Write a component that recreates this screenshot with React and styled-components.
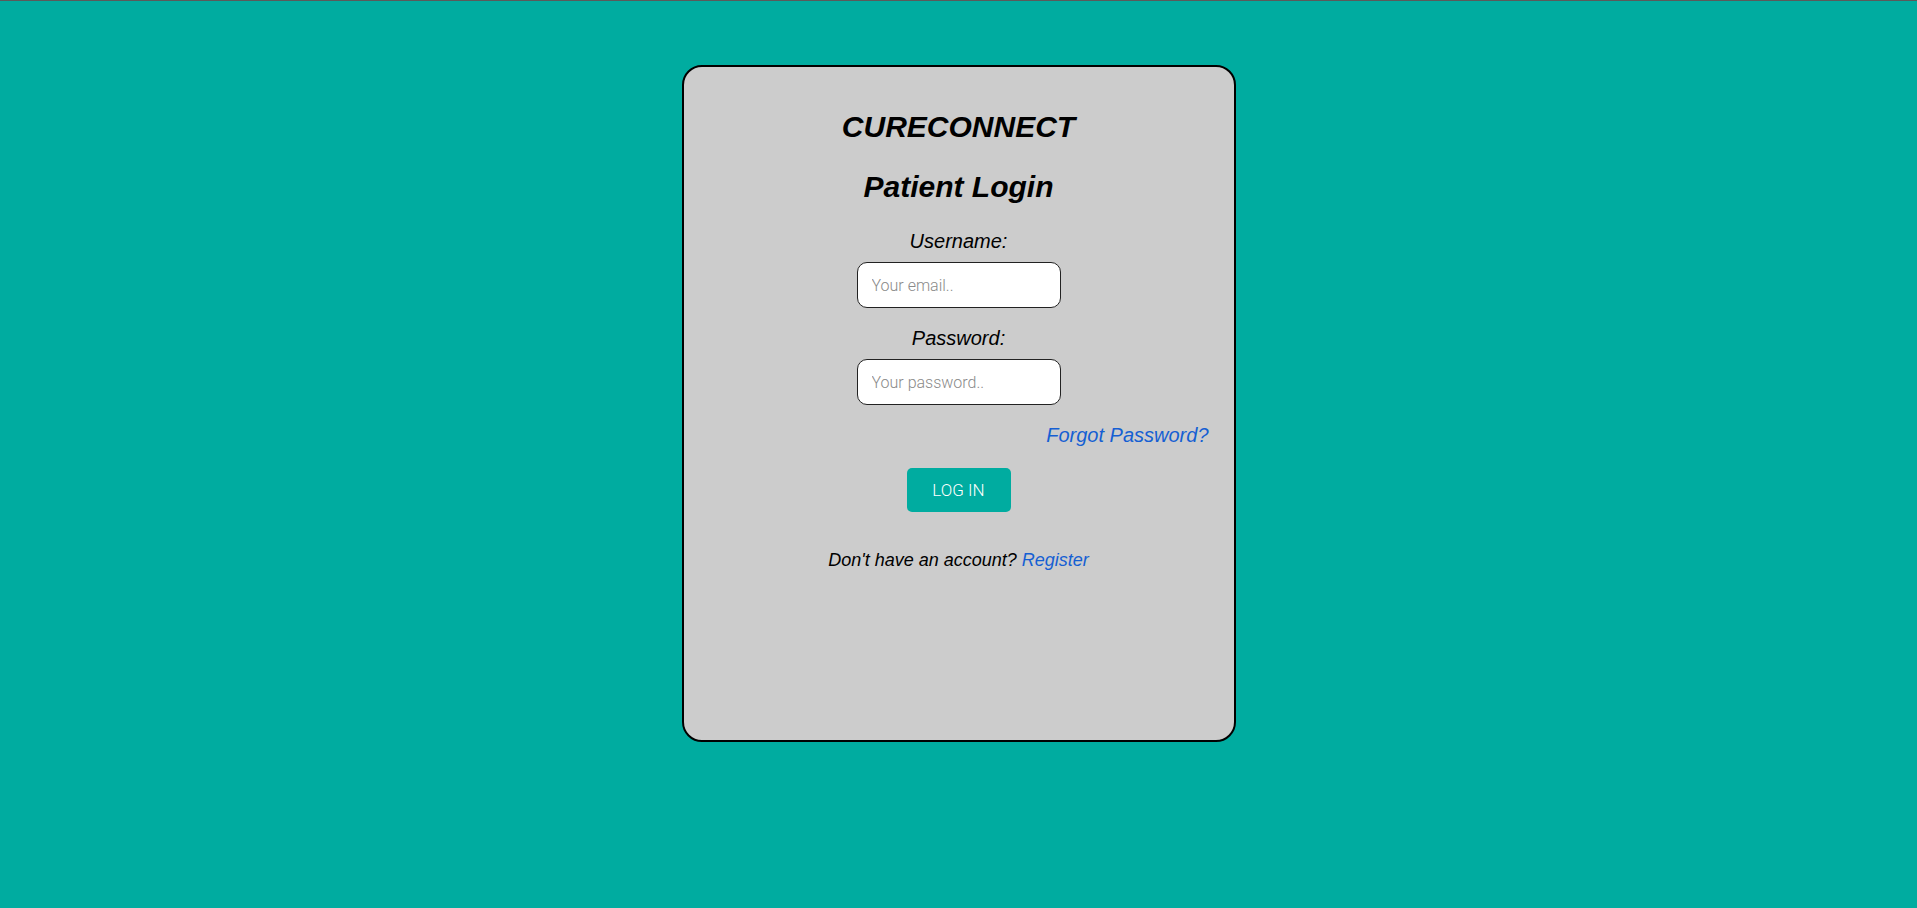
import React from "react";
import styled, { createGlobalStyle } from "styled-components";

const GlobalStyle = createGlobalStyle`
  html, body {
    margin: 0;
    padding: 0;
  }
  body {
    background: #00aca0;
    font-family: "Liberation Sans", Arial, sans-serif;
    min-height: 908px;
    border-top: 1px solid #5a5a5a;
  }
`;

const Page = styled.main`
  display: flex;
  justify-content: center;
  padding-top: 64px;
`;

const Card = styled.form`
  box-sizing: border-box;
  width: 554px;
  height: 677px;
  background: #cccccc;
  border: 2px solid #000;
  border-radius: 20px;
  display: flex;
  flex-direction: column;
  align-items: center;
`;

const Title = styled.h1`
  margin: ${(p) => p.$top}px 0 0;
  font-size: 30px;
  line-height: 34px;
  font-weight: bold;
  font-style: italic;
  color: #000;
`;

const Label = styled.label`
  margin-top: ${(p) => p.$top}px;
  font-size: 20px;
  line-height: 23px;
  font-style: italic;
  color: #000;
`;

const Input = styled.input`
  box-sizing: border-box;
  margin-top: 9px;
  width: 204px;
  height: 46px;
  padding: 0 14px;
  border: 1px solid #222;
  border-radius: 10px;
  background: #fff;
  font-family: Roboto, "Liberation Sans", sans-serif;
  font-weight: 300;
  font-size: 16px;
  color: #333;
  outline: none;
  &::placeholder {
    color: #8a8a8a;
  }
`;

const Forgot = styled.a`
  align-self: flex-end;
  margin: 19px 25px 0 0;
  font-size: 20px;
  line-height: 23px;
  font-style: italic;
  color: #155fd3;
  text-decoration: none;
  cursor: pointer;
`;

const Button = styled.button`
  margin-top: 21px;
  width: 104px;
  height: 44px;
  border: none;
  border-radius: 5px;
  background: #00aca0;
  color: #fff;
  font-family: Roboto, "Liberation Sans", sans-serif;
  font-weight: 300;
  font-size: 17px;
  cursor: pointer;
`;

const Footer = styled.p`
  margin: 38px 0 0;
  font-size: 18px;
  line-height: 21px;
  font-style: italic;
  color: #000;
`;

const Link = styled.a`
  color: #155fd3;
  text-decoration: none;
  cursor: pointer;
`;

export default function App() {
  return (
    <>
      <GlobalStyle />
      <Page>
        <Card onSubmit={(e) => e.preventDefault()}>
          <Title $top={43}>CURECONNECT</Title>
          <Title $top={26}>Patient Login</Title>
          <Label $top={26} htmlFor="username">Username:</Label>
          <Input id="username" type="email" placeholder="Your email.." />
          <Label $top={19} htmlFor="password">Password:</Label>
          <Input id="password" type="password" placeholder="Your password.." />
          <Forgot>Forgot Password?</Forgot>
          <Button type="submit">LOG IN</Button>
          <Footer>
            Don't have an account? <Link>Register</Link>
          </Footer>
        </Card>
      </Page>
    </>
  );
}
